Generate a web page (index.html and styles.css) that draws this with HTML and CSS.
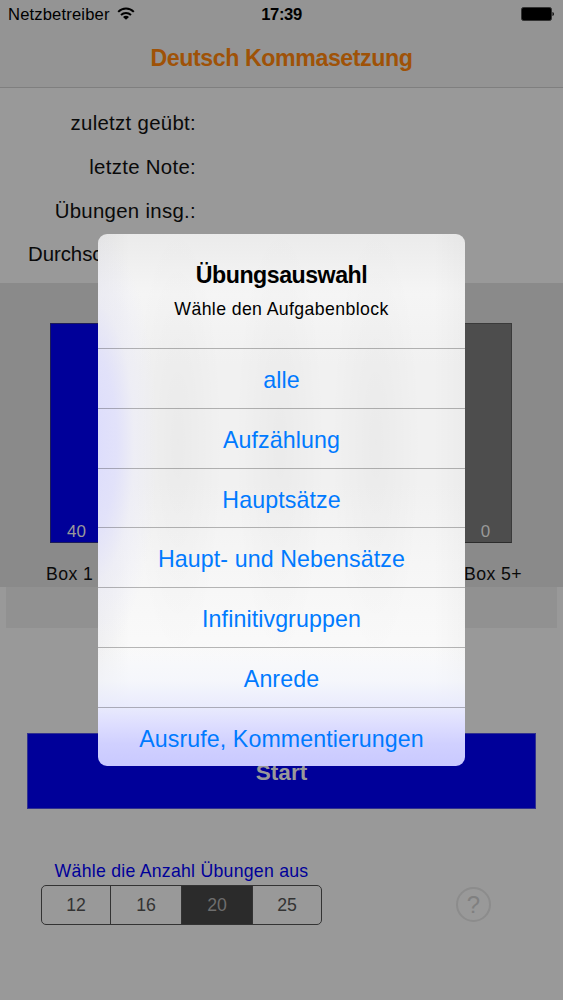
FILE: index.html
```html
<!DOCTYPE html>
<html lang="de">
<head>
    <meta charset="UTF-8">
    <meta name="viewport" content="width=device-width, initial-scale=1.0">
    <title>Deutsch Kommasetzung</title>
    <link rel="stylesheet" href="styles.css">
</head>
<body>
    <header class="header">
        <div class="status-bar">
            <div class="carrier">
                <span>Netzbetreiber</span>
                <svg class="wifi" width="18" height="14" viewBox="0 0 18 14" fill="none" stroke="#000" stroke-width="2">
                    <path d="M1.2 4.9C5.6.5 12.4.5 16.8 4.9"/>
                    <path d="M4 8C6.9 5.200 11.1 5.200 14 8"/>
                    <path d="M9 12.800L6 9.900C7.800 8.300 10.200 8.300 12 9.900Z" fill="#000" stroke="none"/>
                </svg>
            </div>
            <div class="time">17:39</div>
            <div class="battery-wrap">
                <svg width="34" height="14" viewBox="0 0 34 14">
                    <rect x=".5" y=".5" width="30" height="13" rx="2" fill="#000" stroke="#333"/>
                    <path d="M31.500 5C33.300 5.500 33.300 8.500 31.500 9Z" fill="#000"/>
                </svg>
            </div>
        </div>
        <h1 class="title">Deutsch Kommasetzung</h1>
    </header>

    <div class="stats">
        <div>zuletzt geübt:</div>
        <div>letzte Note:</div>
        <div>Übungen insg.:</div>
        <div class="tight">Durchschnittsnote:</div>
    </div>

    <div class="chart">
        <div class="bars">
            <div class="bar bar-blue">40</div>
            <div class="bar">0</div>
        </div>
        <div class="bar-labels">
            <span>Box 1</span>
            <span>Box 5+</span>
        </div>
    </div>
    <div class="strip"></div>

    <button class="start" type="button">Start</button>

    <div class="footer">
        <div class="count">
            <div class="count-label">Wähle die Anzahl Übungen aus</div>
            <div class="segments">
                <span>12</span>
                <span>16</span>
                <span class="active">20</span>
                <span>25</span>
            </div>
        </div>
        <div class="help">?</div>
    </div>

    <div class="overlay">
        <div class="dialog">
            <div class="dialog-head">
                <h2>Übungsauswahl</h2>
                <p>Wähle den Aufgabenblock</p>
            </div>
            <div class="option">alle</div>
            <div class="option">Aufzählung</div>
            <div class="option">Hauptsätze</div>
            <div class="option">Haupt- und Nebensätze</div>
            <div class="option">Infinitivgruppen</div>
            <div class="option">Anrede</div>
            <div class="option">Ausrufe, Kommentierungen</div>
        </div>
    </div>
</body>
</html>
```
FILE: styles.css
```css
* {
    box-sizing: border-box;
}
body {
    margin: 0;
    width: 563px;
    height: 1000px;
    overflow: hidden;
    background: #999;
    color: #0a0a0a;
    font-family: "Liberation Sans", Arial, sans-serif;
}
.header {
    height: 88px;
    background: #949494;
    border-bottom: 1px solid #7f7f7f;
}
.status-bar {
    display: grid;
    grid-template-columns: 1fr auto 1fr;
    height: 30px;
    padding: 0 8px;
    font-size: 16.6px;
    line-height: 30px;
    color: #000;
}
.carrier {
    display: flex;
    gap: 7px;
    letter-spacing: 0.15px;
}
.wifi {
    margin-top: 7px;
}
.time {
    font-weight: bold;
    letter-spacing: -0.4px;
}
.battery-wrap {
    display: flex;
    justify-content: flex-end;
    padding-top: 7px;
}
.title {
    margin: 0;
    font-size: 23.2px;
    font-weight: bold;
    line-height: 56px;
    text-align: center;
    letter-spacing: -0.43px;
    color: #9f5207;
}
.stats {
    width: 196px;
    height: 195px;
    padding-top: 14px;
    font-size: 20.4px;
    line-height: 43.75px;
    letter-spacing: 0.3px;
    display: flex;
    flex-direction: column;
    align-items: flex-end;
}
.stats .tight {
    letter-spacing: -0.05px;
}

/* chart */
.chart {
    height: 304px;
    padding: 40px 51px 0 50px;
    background: #8a8a8a;
}
.bars {
    display: flex;
    justify-content: space-between;
}
.bar {
    display: flex;
    align-items: flex-end;
    justify-content: center;
    width: 53px;
    height: 220px;
    background: #4d4d4d;
    border: 1px solid #3a3a3a;
    border-bottom: 1px solid #2c2c2c;
    font-size: 17px;
    line-height: 20px;
    color: #999;
}
.bar-blue {
    background: #000099;
    border-color: #1c1c58;
}
.bar-labels {
    display: flex;
    justify-content: space-between;
    margin: 20px -10px 0 -4px;
    font-size: 17.7px;
    line-height: 22px;
    letter-spacing: 0.4px;
}
.strip {
    height: 41px;
    margin: 0 6px;
    background: #919191;
}

.start {
    display: block;
    width: 509px;
    height: 76px;
    margin: 105px 0 0 27px;
    padding: 3px 0 0;
    border: 1px solid #31318f;
    background: #000099;
    font: bold 22.6px "Liberation Sans", Arial, sans-serif;
    color: #999;
}

.footer {
    display: flex;
    justify-content: space-between;
    align-items: flex-end;
    margin-top: 51px;
    padding: 0 72px 0 41px;
}
.count {
    width: 281px;
}
.count-label {
    font-size: 17.7px;
    line-height: 22px;
    margin-bottom: 3px;
    letter-spacing: 0.25px;
    text-align: center;
    color: #000099;
}
.segments {
    display: grid;
    grid-template-columns: 68px 71px 71px 1fr;
    height: 40px;
    border: 1.500px solid #333;
    border-radius: 5px;
    overflow: hidden;
    font-size: 17.7px;
    line-height: 38px;
    text-align: center;
    color: #333;
}
.segments span + span {
    border-left: 1px solid #333;
}
.segments .active {
    background: #2b2b2b;
    color: #6e6e6e;
}
.help {
    width: 35px;
    height: 35px;
    margin-bottom: 3px;
    border: 2px solid #8c8c8c;
    border-radius: 50%;
    font-size: 24px;
    line-height: 32px;
    text-align: center;
    color: #808080;
}

/* dialog */
.overlay {
    position: absolute;
    top: 0;
    left: 0;
    width: 563px;
    height: 1000px;
    display: flex;
    align-items: center;
    justify-content: center;
}
.dialog {
    width: 367px;
    height: 532px;
    border-radius: 9px;
    overflow: hidden;
    text-align: center;
    background:
        linear-gradient(to top, #c9c9ff 0, #d0d0ff 22px, #dedeff 42px, rgba(232, 234, 253, 0.9) 60px, rgba(240, 243, 253, 0.5) 85px, rgba(248, 249, 251, 0) 120px),
        radial-gradient(ellipse 68px 220px at -8px 208px, rgba(220, 220, 253, 1) 0, rgba(224, 224, 252, 0.85) 40%, rgba(234, 234, 249, 0.5) 65%, rgba(240, 240, 246, 0) 100%),
        radial-gradient(ellipse 45px 220px at 80px 208px, rgba(0, 0, 0, 0.026), transparent),
        radial-gradient(ellipse 45px 220px at 182px 208px, rgba(0, 0, 0, 0.026), transparent),
        radial-gradient(ellipse 45px 220px at 278px 208px, rgba(0, 0, 0, 0.026), transparent),
        linear-gradient(to right, rgba(0, 0, 0, 0.035), transparent 32px, transparent 335px, rgba(0, 0, 0, 0.025)),
        linear-gradient(#ebebeb 0, #f5f5f5 60px, #f1f1f1 130px, #f1f1f1 250px, #f6f6f6 330px, #fafafa 430px);
}
.dialog-head {
    height: 114px;
    padding-top: 26px;
    color: #000;
}
.dialog-head h2 {
    margin: 0;
    font-size: 23.2px;
    font-weight: bold;
    line-height: 30px;
    letter-spacing: -0.5px;
}
.dialog-head p {
    margin: 8px 0 0;
    font-size: 17.7px;
    line-height: 22px;
    letter-spacing: 0.38px;
}
.option {
    height: 59.75px;
    border-top: 1px solid rgba(0, 0, 0, 0.27);
    font-size: 23.2px;
    line-height: 62px;
    letter-spacing: 0.1px;
    color: #007aff;
}
```
